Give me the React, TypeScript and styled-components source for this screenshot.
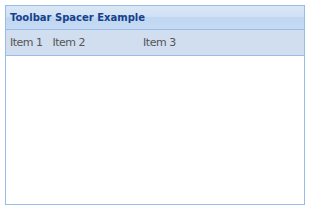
import React from "react";
import styled, { createGlobalStyle } from "styled-components";

const GlobalStyle = createGlobalStyle`
  html, body {
    margin: 0;
    padding: 0;
    background: #ffffff;
  }
  body {
    padding: 5px;
    font-family: "DejaVu Sans", Tahoma, sans-serif;
  }
`;

const Panel = styled.div`
  width: 300px;
  height: 200px;
  box-sizing: border-box;
  border: 1px solid #99bbe8;
  display: flex;
  flex-direction: column;
  background: #ffffff;
`;

const Header = styled.div`
  height: 24px;
  box-sizing: border-box;
  padding: 0 4px;
  display: flex;
  align-items: center;
  border-bottom: 1px solid #99bbe8;
  background: linear-gradient(
    to bottom,
    #dae7f6 0%,
    #d0e1f5 45%,
    #c0d6f1 50%,
    #c6daf3 100%
  );
  color: #15428b;
  font-size: 10px;
  font-weight: bold;
`;

const Toolbar = styled.div`
  height: 26px;
  box-sizing: border-box;
  padding: 0 4px;
  display: flex;
  align-items: center;
  gap: 10px;
  border-bottom: 1px solid #99bbe8;
  background: #d0def0;
`;

const Item = styled.span`
  font-size: 11px;
  letter-spacing: -0.5px;
  color: #555555;
  white-space: nowrap;
`;

const Spacer = styled.div<{ $width: number }>`
  width: ${(p) => p.$width}px;
  flex: none;
`;

const Body = styled.div`
  flex: 1;
  background: #ffffff;
`;

export default function App() {
  return (
    <>
      <GlobalStyle />
      <Panel>
        <Header>Toolbar Spacer Example</Header>
        <Toolbar>
          <Item>Item 1</Item>
          <Item>Item 2</Item>
          <Spacer $width={38} />
          <Item>Item 3</Item>
        </Toolbar>
        <Body />
      </Panel>
    </>
  );
}
